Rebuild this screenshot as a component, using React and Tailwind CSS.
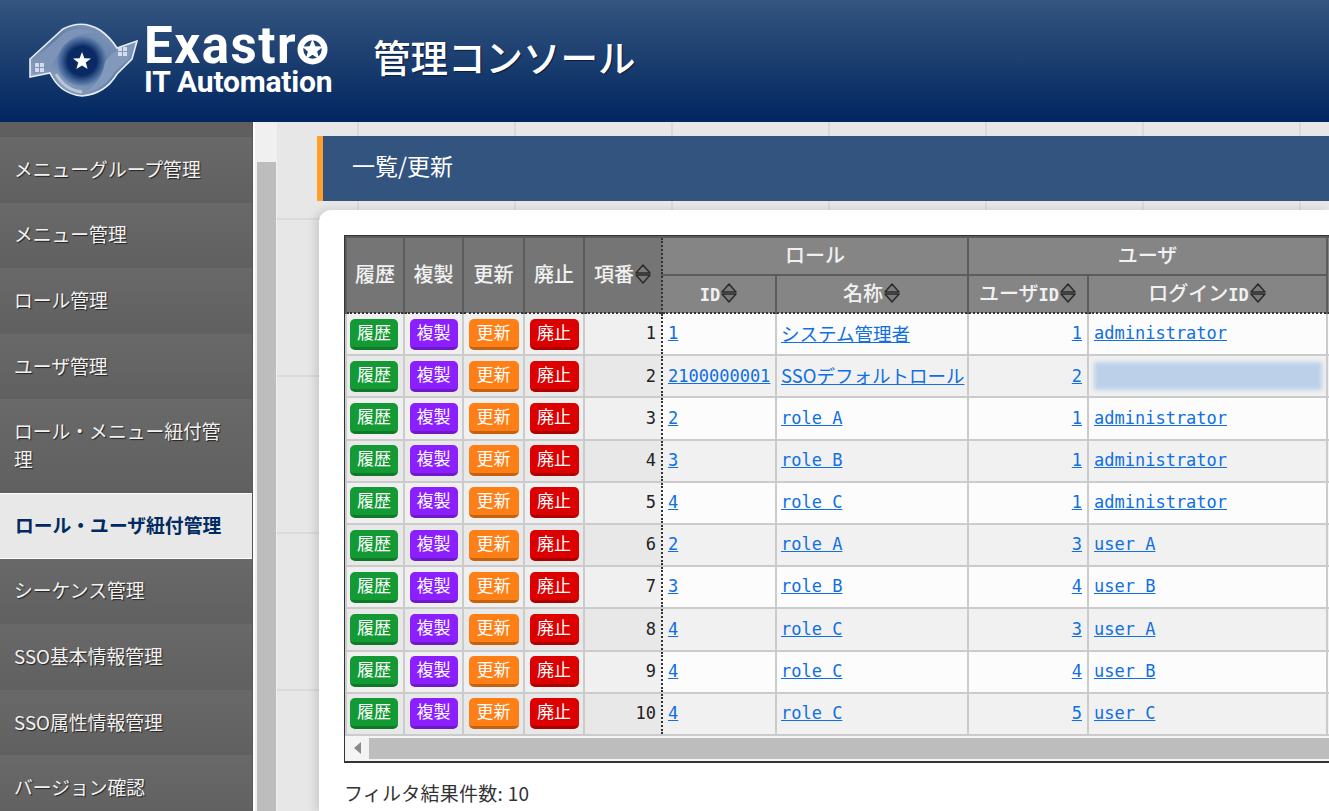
const menus = [
  { label: 'メニューグループ管理' },
  { label: 'メニュー管理' },
  { label: 'ロール管理' },
  { label: 'ユーザ管理' },
  { label: 'ロール・メニュー紐付管理' },
  { label: 'ロール・ユーザ紐付管理', active: true },
  { label: 'シーケンス管理' },
  { label: 'SSO基本情報管理' },
  { label: 'SSO属性情報管理' },
  { label: 'バージョン確認' },
];

const rows = [
  { no: 1, roleId: '1', role: 'システム管理者', userId: 1, login: 'administrator' },
  { no: 2, roleId: '2100000001', role: 'SSOデフォルトロール', userId: 2, blurred: true },
  { no: 3, roleId: '2', role: 'role A', userId: 1, login: 'administrator' },
  { no: 4, roleId: '3', role: 'role B', userId: 1, login: 'administrator' },
  { no: 5, roleId: '4', role: 'role C', userId: 1, login: 'administrator' },
  { no: 6, roleId: '2', role: 'role A', userId: 3, login: 'user A' },
  { no: 7, roleId: '3', role: 'role B', userId: 4, login: 'user B' },
  { no: 8, roleId: '4', role: 'role C', userId: 3, login: 'user A' },
  { no: 9, roleId: '4', role: 'role C', userId: 4, login: 'user B' },
  { no: 10, roleId: '4', role: 'role C', userId: 5, login: 'user C' },
];

const actions = [
  { label: '履歴', cls: 'w-[48px] bg-[#149a34] border-[#0e7a28]' },
  { label: '複製', cls: 'w-[48px] bg-[#8c1fff] border-[#6f19c9]' },
  { label: '更新', cls: 'w-[50px] bg-[#ff7f17] border-[#c4620f]' },
  { label: '廃止', cls: 'w-[49px] bg-[#dc0000] border-[#ad0000]' },
];

const jp = "font-['Noto_Sans_CJK_JP','Noto_Sans',sans-serif]";
const mono = "font-['DejaVu_Sans_Mono','Noto_Sans_CJK_JP',monospace]";

function Logo() {
  return (
    <svg width="130" height="90" viewBox="0 0 130 90" className="shrink-0">
      <defs>
        <linearGradient id="eye" x1="0" y1="1" x2="1" y2="0">
          <stop offset="0" stopColor="#a3b4cd" />
          <stop offset="0.5" stopColor="#5f7ca6" />
          <stop offset="1" stopColor="#8fa4c3" />
        </linearGradient>
        <radialGradient id="ring">
          <stop offset="0.58" stopColor="#0b2a63" />
          <stop offset="0.82" stopColor="#3f6296" />
          <stop offset="1" stopColor="#6d88af" />
        </radialGradient>
      </defs>
      <path
        d="M10 61 L10 43 L43 13 Q62 3 80 14 Q90 21 97 32 L117 25 L112 43 L97 58 Q85 78 62 80 Q40 78 30 57 Z"
        fill="url(#eye)"
        stroke="#e8edf4"
        strokeWidth="1.6"
      />
      <circle cx="62" cy="45" r="25" fill="url(#ring)" />
      <path d="M13 58 L13 45 L44 17 Q60 9 76 17 Q54 16 42 32 L30 52 Z" fill="#7d94b8" />
      <path d="M113 29 L109 42 L95 56 Q84 74 64 77 Q82 66 85 46 Q90 38 97 35 Z" fill="#8299bc" />
      <path d="M36 58 Q45 74 62 76" fill="none" stroke="#b9c6d9" strokeWidth="3" />
      <polygon
        points="62,36 64.4,42.2 71,42.5 65.8,46.6 67.6,53 62,49.4 56.4,53 58.2,46.6 53,42.5 59.6,42.2"
        fill="#fff"
      />
      <g fill="#d5ddea">
        <rect x="15" y="47" width="4" height="4" />
        <rect x="20" y="47" width="4" height="4" />
        <rect x="15" y="52" width="4" height="4" />
        <rect x="20" y="52" width="4" height="4" />
        <rect x="98" y="31" width="4" height="4" />
        <rect x="103" y="31" width="4" height="4" />
        <rect x="98" y="36" width="4" height="4" />
        <rect x="103" y="36" width="4" height="4" />
      </g>
    </svg>
  );
}

function StarDot() {
  return (
    <svg width="31" height="31" viewBox="0 0 32 32" className="shrink-0 mt-[6px]">
      <circle cx="16" cy="16" r="12.5" fill="none" stroke="#fff" strokeWidth="6" />
      <polygon
        points="16,5 19,12.6 27,13 20.8,18 22.9,26 16,21.5 9.1,26 11.2,18 5,13 13,12.6"
        fill="#fff"
      />
    </svg>
  );
}

function SortIcon() {
  return (
    <svg width="18" height="22" viewBox="0 0 18 22" className="inline-block shrink-0">
      <path d="M9 2 L16 10 H2 Z" fill="#7a7a7a" stroke="#2b2b2b" strokeWidth="1.5" strokeLinejoin="round" />
      <path d="M2 12 H16 L9 20 Z" fill="#7a7a7a" stroke="#2b2b2b" strokeWidth="1.5" strokeLinejoin="round" />
    </svg>
  );
}

function HeadLabel({ children }) {
  return (
    <span className="inline-flex items-center justify-center">
      <span>{children}</span>
      <SortIcon />
    </span>
  );
}

function Sidebar() {
  return (
    <nav className="w-[253px] shrink-0 bg-[#666] border-r border-[#555] overflow-hidden">
      <div className="h-[15px] bg-[#5f5f5f]" />
      {menus.map((m) => (
        <div
          key={m.label}
          className={
            m.active
              ? 'h-[65.6px] flex items-center pl-[15px] pb-[2px] bg-[#e8e8e8] border-y border-white text-[#002b62] font-bold text-[18.8px]'
              : 'flex items-center pl-[14px] pr-[20px] pt-[17.8px] pb-[19.8px] leading-[28px] bg-gradient-to-b from-[#696969] to-[#606060] text-[#f2f2f2] text-[18.8px] [text-shadow:1px_1px_1px_#222]'
          }
        >
          {m.label}
        </div>
      ))}
    </nav>
  );
}

function RoleTable() {
  const thBase = 'border-2 border-[#5c5c5c] font-medium text-[#f1f1f1] text-center p-0 pb-[2px]';
  const dotted = 'border-l-[#333] [border-left-style:dotted]';
  const idLabel = `${mono} font-bold text-[17px]`;
  return (
    <div className="w-[1100px] border border-[#333] border-r-0 border-b-2">
      <table className="table-fixed border-collapse w-[1099px] text-[17px]">
        <colgroup>
          <col className="w-[58px]" />
          <col className="w-[59px]" />
          <col className="w-[61px]" />
          <col className="w-[60px]" />
          <col className="w-[78px]" />
          <col className="w-[114px]" />
          <col className="w-[192px]" />
          <col className="w-[120px]" />
          <col className="w-[239px]" />
          <col />
        </colgroup>
        <thead className="text-[20px]">
          <tr className="h-[38px]">
            {['履歴', '複製', '更新', '廃止'].map((h) => (
              <th key={h} rowSpan={2} className={`${thBase} bg-[#757575] border-b-0`}>
                {h}
              </th>
            ))}
            <th rowSpan={2} className={`${thBase} bg-[#757575] border-b-0 border-r-0`}>
              <HeadLabel>項番</HeadLabel>
            </th>
            <th colSpan={2} className={`${thBase} bg-[#858585] ${dotted}`}>
              ロール
            </th>
            <th colSpan={2} className={`${thBase} bg-[#858585]`}>
              ユーザ
            </th>
            <th rowSpan={2} className={`${thBase} bg-[#858585] border-b-0`} />
          </tr>
          <tr className="h-[38px]">
            <th className={`${thBase} bg-[#858585] border-b-0 ${dotted}`}>
              <HeadLabel>
                <span className={idLabel}>ID</span>
              </HeadLabel>
            </th>
            <th className={`${thBase} bg-[#858585] border-b-0`}>
              <HeadLabel>名称</HeadLabel>
            </th>
            <th className={`${thBase} bg-[#858585] border-b-0`}>
              <HeadLabel>
                ユーザ<span className={idLabel}>ID</span>
              </HeadLabel>
            </th>
            <th className={`${thBase} bg-[#858585] border-b-0`}>
              <HeadLabel>
                ログイン<span className={idLabel}>ID</span>
              </HeadLabel>
            </th>
          </tr>
        </thead>
        <tbody className={mono}>
          {rows.map((r, i) => {
            const even = i % 2 === 1;
            const fixedBg = even ? 'bg-[#e8e8e8]' : 'bg-[#f0f0f0]';
            const dataBg = even ? 'bg-[#f1f1f1]' : 'bg-[#fcfcfc]';
            const top = i === 0 ? 'border-t-[#333] [border-top-style:dotted]' : '';
            const cell = `border-2 border-[#cbcbcb] p-0 ${top}`;
            return (
              <tr key={r.no} className="h-[42.2px]">
                {actions.map((a, k) => (
                  <td key={a.label} className={`${cell} ${fixedBg}`}>
                    <div className={`flex justify-center ${k === 0 ? 'pr-[2px]' : ''}`}>
                      <button
                        className={`${a.cls} ${jp} h-[31px] rounded-[5px] border-b-[3px] text-white text-[17px] leading-[22px] pb-[2px]`}
                      >
                        {a.label}
                      </button>
                    </div>
                  </td>
                ))}
                <td className={`${cell} ${fixedBg} text-right pr-[5px] text-[#222] border-r-0`}>{r.no}</td>
                <td className={`${cell} ${dataBg} pl-[5px] whitespace-nowrap ${dotted}`}>
                  <a className="text-[#0f6fe3] underline">{r.roleId}</a>
                </td>
                <td className={`${cell} ${dataBg} pl-[4px] whitespace-nowrap`}>
                  <a className={`text-[#0f6fe3] underline ${r.role.startsWith('role') ? '' : `${jp} text-[18.5px]`}`}>
                    {r.role}
                  </a>
                </td>
                <td className={`${cell} ${dataBg} text-right pr-[5px]`}>
                  <a className="text-[#0f6fe3] underline">{r.userId}</a>
                </td>
                <td className={`${cell} ${dataBg} pl-[5px] whitespace-nowrap`}>
                  {r.blurred ? (
                    <div className="h-[28px] mr-[4px] bg-[#bcd0ea] blur-[2px]" />
                  ) : (
                    <a className="text-[#0f6fe3] underline">{r.login}</a>
                  )}
                </td>
                <td className={`${cell} ${dataBg}`} />
              </tr>
            );
          })}
        </tbody>
      </table>
      <div className="flex h-[25px] items-stretch bg-[#f4f4f4] py-[2px]">
        <div className="w-[24px] flex items-center justify-center">
          <span className="w-0 h-0 border-y-[6px] border-y-transparent border-r-[7px] border-r-[#8a8a8a]" />
        </div>
        <div className="flex-1 bg-[#bdbdbd]" />
      </div>
    </div>
  );
}

export default function App() {
  return (
    <div className={`h-screen flex flex-col overflow-hidden bg-white ${jp}`}>
      <header className="h-[122px] shrink-0 flex items-center bg-gradient-to-b from-[#34557f] to-[#022660] pl-[20px]">
        <Logo />
        <div className="-ml-[6px] w-[187px] flex flex-col text-white font-['Roboto',sans-serif] font-bold">
          <div className="flex items-center h-[42px]">
            <span className="text-[51px] leading-[42px] tracking-[1.5px]">Exastr</span>
            <StarDot />
          </div>
          <div className="text-[30px] leading-[30px] whitespace-nowrap -tracking-[0.2px]">IT Automation</div>
        </div>
        <h1 className="ml-[42px] mb-[10px] text-[37.5px] font-medium text-white leading-none [text-shadow:1px_1px_1px_#0a1d40]">
          管理コンソール
        </h1>
      </header>

      <div className="flex flex-1 min-h-0">
        <Sidebar />
        <div className="w-[24px] shrink-0 bg-[#f0f0f0] pt-[40px] pl-[2px] pr-[1px] border-l-[2px] border-white flex">
          <div className="flex-1 bg-[#bdbdbd]" />
        </div>
        <main className="flex-1 min-w-0 pl-[40px] pt-[14px] bg-[#e7e7e7] bg-[linear-gradient(#dadada_2px,transparent_2px),linear-gradient(90deg,#dadada_2px,transparent_2px)] bg-[size:157px_157px] bg-[position:80px_96px] flex flex-col">
          <div className="h-[65px] shrink-0 bg-[#32547f] border-l-[6px] border-[#ff9f2a] flex items-center pl-[29px] pb-[6px] text-white text-[23px]">
            一覧/更新
          </div>
          <section className="flex-1 mt-[9px] ml-[2px] bg-white rounded-tl-[12px] pl-[25px] pt-[25px] overflow-hidden shadow-[-4px_0_8px_rgba(0,0,0,0.12)]">
            <RoleTable />
            <p className="mt-[16px] text-[19px] tracking-[0.25px] text-[#333]">フィルタ結果件数: 10</p>
          </section>
        </main>
      </div>
    </div>
  );
}
